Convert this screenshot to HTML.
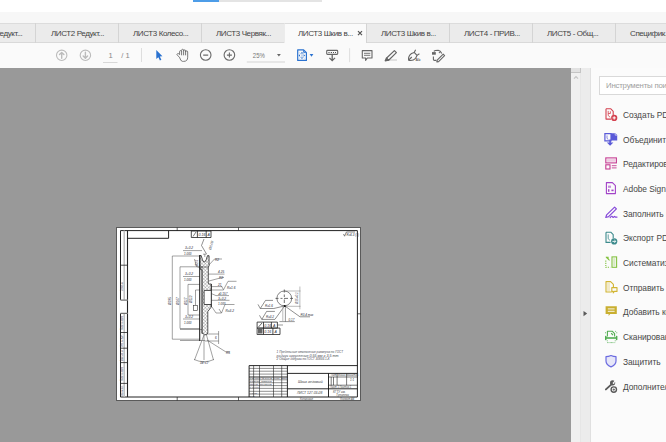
<!DOCTYPE html>
<html><head><meta charset="utf-8">
<style>
*{margin:0;padding:0;box-sizing:border-box}
html,body{width:666px;height:442px;overflow:hidden;background:#fff;font-family:"Liberation Sans",sans-serif}
.abs{position:absolute}
#topbar{left:0;top:0;width:666px;height:12px;background:#fff}
#band{left:0;top:12px;width:666px;height:11px;background:#f7f7f7}
#prog1{left:193px;top:0;width:26px;height:2px;background:#4d9de8}
#prog2{left:219px;top:0;width:103px;height:2px;background:#e4e4e4}
#tabs{left:0;top:23px;width:666px;height:20px;background:#ebebeb;border-top:1px solid #dcdcdc;border-bottom:1px solid #d9d9d9}
.tab{position:absolute;top:23px;height:20px;border-right:1px solid #d4d4d4;font-size:8px;letter-spacing:-0.4px;color:#444;line-height:22px;white-space:nowrap;overflow:hidden}
.tab span{position:absolute;top:0}
#toolbar{left:0;top:43px;width:666px;height:25px;background:#fafafa}
#doc{left:0;top:68px;width:571px;height:374px;background:#999}
#sb{left:571px;top:68px;width:10px;height:374px;background:#f0f0f0;border-right:1px solid #e6e6e6}
#sbtop{left:571px;top:68px;width:10px;height:5px;background:#e2e2e2;border-right:1px solid #c4c4c4;border-bottom:1px solid #c4c4c4}
#strip{left:581px;top:68px;width:10px;height:374px;background:#ececec;border-right:1px solid #e0e0e0}
#panel{left:591px;top:68px;width:75px;height:374px;background:#fbfbfb}
#search{left:599px;top:76px;width:80px;height:19px;background:#fff;border:1px solid #d9d9d9;font-size:7.8px;letter-spacing:-0.2px;color:#a0a0a0;line-height:17px;padding-left:6px;white-space:nowrap;overflow:hidden}
.item{position:absolute;left:623px;font-size:8.4px;letter-spacing:-0.05px;color:#474747;white-space:nowrap}
.ico{position:absolute;left:604px}
#page{left:116px;top:227px;width:245px;height:174px;background:#fff;border:1px solid #3a3a3a}
</style></head><body>
<div class="abs" id="topbar"></div>
<div class="abs" id="band"></div>
<div class="abs" id="prog1"></div>
<div class="abs" id="prog2"></div>
<div class="abs" id="tabs"></div>
<div class="tab" style="left:0;width:36px"><span style="left:-5px">Редукт...</span></div>
<div class="tab" style="left:36px;width:83px"><span style="left:15px">ЛИСТ2 Редукт...</span></div>
<div class="tab" style="left:119px;width:83px"><span style="left:14px">ЛИСТ3 Колесо...</span></div>
<div class="tab" style="left:202px;width:83px"><span style="left:14px">ЛИСТ3 Червяк...</span></div>
<div class="tab" style="left:284px;width:83px;background:#fafafa;height:21px;line-height:21px;border-top:1px solid #dcdcdc;border-left:1px solid #ececec"><span style="left:13px;top:-0.6px">ЛИСТ3 Шкив в...</span><svg style="position:absolute;left:71px;top:6px" width="8" height="8"><path d="M2,1.1L6,5.1M6,1.1L2,5.1" stroke="#555" stroke-width="1.2"/></svg></div>
<div class="tab" style="left:367px;width:83px"><span style="left:14px">ЛИСТ3 Шкив в...</span></div>
<div class="tab" style="left:450px;width:83px"><span style="left:14px">ЛИСТ4 - ПРИВ...</span></div>
<div class="tab" style="left:533px;width:83px"><span style="left:14px">ЛИСТ5 - Общ...</span></div>
<div class="tab" style="left:616px;width:60px"><span style="left:14px">Специфик...</span></div>
<div class="abs" id="toolbar"></div>
<svg class="abs" style="left:0;top:0" width="666" height="68" viewBox="0 0 666 68">
<g fill="none" stroke="#bcbcbc" stroke-width="1.1">
<circle cx="61.7" cy="55.3" r="5.2"/>
<circle cx="85.4" cy="55.3" r="5.2"/>
</g>
<g fill="none" stroke="#bcbcbc" stroke-width="1.4" stroke-linecap="round" stroke-linejoin="round">
<path d="M61.7,58.3V52.6M59.5,54.6L61.7,52.4L63.9,54.6"/>
<path d="M85.4,52.3V58M83.2,56L85.4,58.2L87.6,56"/>
</g>
<text x="108.6" y="58" font-size="7.6" fill="#888" font-family="Liberation Sans">1</text>
<line x1="103" y1="62.5" x2="117.5" y2="62.5" stroke="#d8d8d8" stroke-width="1"/>
<text x="121.2" y="58" font-size="7.6" fill="#888" font-family="Liberation Sans">/ 1</text>
<line x1="141.5" y1="48" x2="141.5" y2="62" stroke="#dedede" stroke-width="1"/>
<path d="M156.3,50L162.4,56.3L159.8,56.5L161.4,59.8L159.9,60.5L158.4,57.2L156.3,59Z" fill="#2a72d0"/>
<g fill="#fafafa" stroke="#6a6a6a" stroke-width="0.9" stroke-linejoin="round">
<path d="M179.5,57.2L177.3,55.2Q176.4,54.2 177.6,53.6Q178.6,53.3 179.6,54.6V51.7Q179.6,50.6 180.6,50.6Q181.6,50.6 181.6,51.7V50.4Q181.6,49.3 182.6,49.3Q183.6,49.3 183.6,50.4V50.9Q183.6,49.9 184.6,49.9Q185.6,49.9 185.6,50.9V51.9Q185.6,50.9 186.6,50.9Q187.7,50.9 187.7,51.9V57.2Q187.7,61.4 183.6,61.4H182.6Q180.6,61.4 179.5,57.2Z"/>
<path d="M181.6,51.7V55.3M183.6,50.4V55.3M185.6,50.9V55.3"/>
</g>
<g fill="none" stroke="#6a6a6a" stroke-width="1.1">
<circle cx="205.7" cy="55" r="5.3"/>
<circle cx="229.4" cy="55" r="5.3"/>
<path d="M203.2,55.1H208.2M226.9,55.1H231.9M229.4,52.6V57.6"/>
</g>
<text x="252.8" y="57.8" font-size="7.6" textLength="12" lengthAdjust="spacingAndGlyphs" fill="#777" font-family="Liberation Sans">25%</text>
<path d="M277,54L280.8,54L278.9,56.6Z" fill="#666"/>
<line x1="246.8" y1="62" x2="285" y2="62" stroke="#d4d4d4" stroke-width="1"/>
<g fill="none" stroke="#2a72d0" stroke-width="1.2" stroke-linejoin="round">
<path d="M297.7,49.8H303.6L306.4,52.6V60.4H297.7Z"/>
<path d="M303.6,50.2V52.4H305.8" stroke-width="0.9"/>
</g>
<g fill="#2a72d0">
<path d="M300.6,53.4L302,51.8L303.2,53.4Z"/>
<path d="M300.6,57.4L302,59L303.2,57.4Z"/>
<path d="M300,54.3L298.6,55.5L300,56.7Z"/>
<path d="M303.6,54.3L305.2,55.5L303.6,56.7Z"/>
</g>
<path d="M299.5,52.5L304.5,58.5M304.5,52.5L299.5,58.5" stroke="#2a72d0" stroke-width="0.5" opacity="0.6"/>
<path d="M309.6,54.1L313.4,54.1L311.5,56.8Z" fill="#2a72d0"/>
<g fill="none" stroke="#666" stroke-width="1.1">
<rect x="326.7" y="50.4" width="11" height="4" rx="0.8"/>
<path d="M332.2,55V60.5M329.4,57.9L332.2,60.6L335,57.9" stroke-width="1.3"/>
</g>
<g fill="#555"><rect x="328" y="52" width="2.4" height="1" fill="#999"/><rect x="331" y="52" width="1" height="1"/><rect x="333" y="52" width="1" height="1"/><rect x="335" y="52" width="1" height="1"/></g>
<line x1="349.6" y1="48.2" x2="349.6" y2="62.2" stroke="#dedede" stroke-width="1"/>
<g fill="none" stroke="#666" stroke-width="1.1" stroke-linejoin="round">
<path d="M362.3,50.6H372V58H367.3L365.6,60.3V58H362.3Z"/>
<path d="M364,53.3H370.3M364,55.3H370.3" stroke-width="0.9"/>
</g>
<line x1="386.5" y1="60" x2="397" y2="60" stroke="#cfcfcf" stroke-width="1.2"/>
<g fill="#fafafa" stroke="#666" stroke-width="1.2" stroke-linejoin="round">
<path d="M394.4,50.6L396.4,52.6L388.6,60.2L386.4,58.2Z"/>
<path d="M386.4,58.2L385.2,60.8L388.6,60.2Z" fill="#666"/>
</g>
<g fill="none" stroke="#666" stroke-width="1.1" stroke-linejoin="round">
<path d="M408.6,60.2Q408,56 411.5,53.5L414.2,52.4L417,55.4L415.6,58.3Q412.6,61.4 408.6,60.2Z"/>
<path d="M408.8,60L411.8,57M414.2,52.4L415.6,49.8M417,55.4L419.4,53.8"/>
</g>
<text x="415.6" y="60.6" font-size="3.6" fill="#666" font-family="Liberation Sans" font-weight="bold">Ab</text>
<g fill="none" stroke="#666" stroke-width="1.1" stroke-linejoin="round">
<path d="M433.4,56.4V59.6Q433.4,60.4 434.4,60.4H436.4"/>
<path d="M433.8,51.4Q434.6,50.2 438.2,50.2Q440.4,50.6 441.8,53.4"/>
<path d="M443.2,54.2L444.6,55.6L438.6,61.6L436.8,62L437.2,60.2Z"/>
</g>
<rect x="432" y="52.1" width="3.8" height="2.6" fill="#666"/>
<circle cx="439.4" cy="52.6" r="0.7" fill="#666"/>
</svg>
<div class="abs" id="doc"></div>
<div class="abs" id="sb"></div>
<div class="abs" id="sbtop"></div>
<div class="abs" id="strip"></div>
<svg class="abs" style="left:571px;top:72px" width="10" height="10"><path d="M3,6.6L5,4.6L7,6.6" fill="none" stroke="#c4c4c4" stroke-width="1.3"/></svg>
<svg class="abs" style="left:581px;top:308px" width="10" height="10"><path d="M2.5,3L6.2,5.6L2.5,8.3Z" fill="#5a5a5a"/></svg>
<div class="abs" id="panel"></div>
<div class="abs" id="search">Инструменты поиска</div>
<svg class="abs" style="left:0;top:0" width="666" height="442" viewBox="0 0 666 442">
<defs>
<pattern id="hatch" patternUnits="userSpaceOnUse" width="2.6" height="2.6" patternTransform="rotate(45)">
<rect width="2.6" height="2.6" fill="#fff"/><line x1="0" y1="0" x2="0" y2="2.6" stroke="#444" stroke-width="0.6"/>
</pattern>
<pattern id="xhatch" patternUnits="userSpaceOnUse" width="2.4" height="2.4" patternTransform="rotate(45)">
<rect width="2.4" height="2.4" fill="#fff"/><path d="M0,0V2.4M0,0H2.4" stroke="#555" stroke-width="0.5"/>
</pattern>
</defs>
<rect x="116.5" y="227.5" width="244" height="173" fill="#fff" stroke="#5a5a5a" stroke-width="1"/>
<g fill="none" stroke="#222">
<!-- frame -->
<path d="M120.5,230.6H357.4V397H120.5Z" stroke-width="1"/>
<path d="M127.5,230.6V397" stroke-width="1.1"/>
<path d="M124.2,230.6V300M124.2,313.3V397" stroke="#bbb" stroke-width="1.4"/>
<path d="M120.5,300.1H127.5M120.5,313.3H127.5M120.5,300V313.3" stroke="#fff" stroke-width="1.2"/>
<path d="M120.5,265.2H127.5M120.5,300.1H127.5M120.5,313.3H127.5M120.5,332.5H127.5M120.5,348.2H127.5M120.5,362.6H127.5M120.5,383.4H127.5" stroke-width="0.8"/>
<path d="M127.5,238.3H168.6V230.6" stroke-width="1"/>
<path d="M177.2,227.5V231M177.2,397V400.5M238.5,227.5V231M238.5,397V400.5M357.4,313.8H360.5" stroke-width="0.7"/>
<!-- tolerance frame top -->
<path d="M191.3,231H211V237.5H191.3ZM197.4,231V237.5M206.2,231V237.5" stroke-width="0.8"/>
<path d="M193,236.5L196,232" stroke-width="0.6"/>
<path d="M204,239L201.5,245.5L206.5,254" stroke-width="0.5"/>
</g>
<g fill="#2e2e3a" font-family="Liberation Sans" font-style="italic">
<text x="198.5" y="235.8" font-size="3.6">0.16</text>
<text x="207.4" y="235.8" font-size="3.6">A</text>
<text x="0" y="0" font-size="3.4" transform="translate(211,250) rotate(-75)">Ø0.08</text>
<text font-size="2.6" fill="#3a3a4a" transform="translate(123.4,291) rotate(-90)" textLength="9" lengthAdjust="spacingAndGlyphs">Справ. №</text>
<text font-size="2.6" fill="#3a3a4a" transform="translate(123.4,330) rotate(-90)" textLength="14" lengthAdjust="spacingAndGlyphs">Подп. и дата</text>
<text font-size="2.6" fill="#3a3a4a" transform="translate(123.4,346.5) rotate(-90)" textLength="12" lengthAdjust="spacingAndGlyphs">Инв. № дубл.</text>
<text font-size="2.6" fill="#3a3a4a" transform="translate(123.4,361) rotate(-90)" textLength="11" lengthAdjust="spacingAndGlyphs">Взам. инв. №</text>
<text font-size="2.6" fill="#3a3a4a" transform="translate(123.4,381) rotate(-90)" textLength="14" lengthAdjust="spacingAndGlyphs">Подп. и дата</text>
<text font-size="2.6" fill="#3a3a4a" transform="translate(123.4,395.5) rotate(-90)" textLength="10" lengthAdjust="spacingAndGlyphs">Инв. № подл.</text>
</g>
<!-- dimension lines left -->
<g fill="none" stroke="#444" stroke-width="0.5">
<path d="M172.3,256V339.2M172.3,256H200M172.3,339.2H200"/>
<path d="M180,266.8V328.5M180,266.8H200M180,328.5H200"/>
<path d="M188,284.4V315M188,284.4H200M188,315H200"/>
<path d="M195.5,290V305.4M195.5,290H200"/>
<path d="M183,250.6H202M183,276.5H200M183,319H200"/>
<path d="M194.5,259L196.5,266.5L199.5,267.5"/>
<path d="M180,329.5H205M180,340.5H205M218.6,331V344M205,334H218.6M205,341H218.6"/>
<path d="M207,340L226,352L230,352"/>
<!-- right leaders -->
<path d="M208,266L214.5,259H222M208,274.1H224.5M209,281L222,277.5H224M211,286.6H222"/>
<path d="M211.5,290H223.5M221.5,286L223.5,289.8L228,281.3H236.5"/>
<path d="M207.5,290.7Q212,294.5 216,295.6H229"/>
<path d="M207,300.3H229.5"/>
<path d="M212,307L216,313H221.5M219,309L221.5,313L225,304.5H234.5"/>
<path d="M204,335L194.5,360M206.5,335L213.5,360M194,359.5Q204,364 214,359.5M204,335V360" />
</g>
<g fill="#2e2e3a" font-family="Liberation Sans" font-style="italic" font-size="3.2">
<text x="185" y="249">3+0.2</text>
<text x="184" y="254.5" font-size="3">1.000</text>
<text x="185" y="275">3+0.2</text>
<text x="184" y="280.5" font-size="3">1.000</text>
<text x="185" y="318">3+0.2</text>
<text x="184" y="323.5" font-size="3">1.000</text>
<text x="215" y="261">R2</text>
<text transform="translate(198.2,266) rotate(-90)" font-size="2.8">Ø2.5</text>
<text x="218" y="273">4.25</text>
<text x="219" y="279">R2</text>
<text x="218" y="285.5">21</text>
<text x="227" y="289">Ra1.6</text>
<text x="217.5" y="294.5">⌀0.157</text>
<text x="218" y="299.6">3+0.2</text>
<text x="218" y="305" font-size="3">1.000</text>
<text x="225.5" y="312">Ra3.2</text>
<text x="226" y="353.5">R5</text>
<text x="200" y="363.5" font-size="3">34°±1°</text>
<text x="215" y="338.5" font-size="3">6</text>
<text transform="translate(171,305) rotate(-90)">Ø195</text>
<text transform="translate(179,305) rotate(-90)">Ø167</text>
<text transform="translate(187,305) rotate(-90)">Ø117</text>
<text transform="translate(192,303) rotate(-90)">Ø112</text>
</g>
<rect x="193.5" y="305.4" width="4" height="5" fill="#fff" stroke="#333" stroke-width="0.6"/>
<!-- part section -->
<path d="M200,255.7H201.2L202.2,259.5Q203,262 204.3,262Q205.6,262 206.4,259.5L207.6,255.7H208.9V266L208.3,267V283Q208.3,284 209.3,284H211.3V307L207.8,311.5V333L206.5,334.7H204.5L202,333V270L200,269Z" fill="url(#xhatch)" stroke="#222" stroke-width="0.75"/>
<path d="M200,255.7H201.2L202.2,259.5Q203,262 204.3,262Q205.6,262 206.4,259.5L207.6,255.7H208.9V266L208.3,267H200Z" fill="url(#xhatch)" stroke="#333" stroke-width="0.6"/>
<path d="M203,254.2H206.5M204.8,254.2V257" stroke="#444" stroke-width="0.5" fill="none"/>
<rect x="204.1" y="290.4" width="7.2" height="14.1" fill="#fff"/><path d="M211.3,290.4H204.1V304.5H211.3M211.3,284V307" fill="none" stroke="#222" stroke-width="0.8"/>
<path d="M199.7,255V341" stroke="#222" stroke-width="1.1" fill="none"/>
<path d="M202,266V334" stroke="#333" stroke-width="0.6" fill="none"/>
<!-- circle detail -->
<g fill="none" stroke="#333" stroke-width="0.6">
<circle cx="284.3" cy="298.4" r="7.4"/>
<path d="M275.5,298.4H278.5M280.5,298.4H282.5M284,298.4H288M290,298.4H293M284.3,289.5V292.5M284.3,294.5V297M284.3,299.5V303" stroke-width="0.7"/>
<path d="M299.9,286.5V309.3M284.3,291H300.5M285,306.3H300.5" stroke="#666" stroke-width="0.45"/>
<path d="M258,304.4L260.3,308.5L265.5,300.4H273M260.3,308.5H273.8L284.7,305.9" stroke-width="0.55"/>
<path d="M259.5,315.3L261.8,319.4L266.6,311.4H274.9M261.8,319.4H274.9L284.7,305.9" stroke-width="0.55"/>
<path d="M284.7,305.9L300,316.8H310" stroke-width="0.55"/>
<path d="M285.4,306V321.6M279.4,321.6H294.8M277.4,325H283" stroke-width="0.5"/>
<path d="M282.8,307V321" stroke="#aaa" stroke-width="0.8"/>
</g>
<circle cx="284.7" cy="305.9" r="1" fill="#111"/>
<g fill="#2e2e3a" font-family="Liberation Sans" font-style="italic" font-size="3">
<text x="265" y="306.5">Ra1.6</text>
<text x="266" y="318">Ra3.2</text>
<text x="300.5" y="316">R0.4 max</text>
<text x="288.5" y="320.5">0.17</text>
<text transform="translate(297.5,304) rotate(-90)">Ø15+0.1</text>
</g>
<g fill="none" stroke="#222" stroke-width="0.8">
<path d="M257.1,322.1H277.4V328.1H257.1ZM263.5,322.1V334.5M271.4,322.1V328.1"/>
<path d="M257.1,328.1H280V334.5H257.1ZM272.9,328.1V334.5"/>
</g>
<rect x="258" y="329" width="4.5" height="4.5" fill="#666"/>
<path d="M258.5,327L262,323" stroke="#222" stroke-width="0.7"/>
<g fill="#2e2e3a" font-family="Liberation Sans" font-style="italic" font-size="3.6">
<text x="264.3" y="327">0.16</text><text x="273" y="327">A</text>
<text x="264.3" y="333.4">0.16</text><text x="274.5" y="333.4">A</text>
</g>
<!-- notes -->
<g fill="#4a4a55" font-family="Liberation Sans" font-style="italic" font-size="3.2">
<text x="276.6" y="353" textLength="66.5" lengthAdjust="spacingAndGlyphs">1 Предельные отклонения размеров по ГОСТ</text>
<text x="276.6" y="356.5" textLength="62" lengthAdjust="spacingAndGlyphs">радиус скругления 0.55 мм в 3.5 mm</text>
<text x="276.6" y="360" textLength="53" lengthAdjust="spacingAndGlyphs">2 Общие допуски по ГОСТ 30893.1-К</text>
</g>
<path d="M343.5,234L344.6,236.2L346.4,232H355" fill="none" stroke="#333" stroke-width="0.6"/>
<text x="346.5" y="236" font-size="3" fill="#2e2e3a" font-family="Liberation Sans" font-style="italic">Ra6.3 (√)</text>
<!-- title block -->
<g fill="none" stroke="#111" stroke-width="0.9">
<path d="M249.1,397V365.6H357.4M287.4,365.6V397M287.4,373.4H357.4M287.4,388.8H357.4M328.5,373.4V397M249.1,377H287.4"/>
</g>
<g fill="none" stroke="#222" stroke-width="0.6">
<path d="M253.6,365.6V397M259.5,365.6V397M273.5,365.6V397M281.7,365.6V397"/>
<path d="M249.1,368.4H287.4M249.1,371.2H287.4M249.1,374.1H287.4M249.1,379.8H287.4M249.1,382.7H287.4M249.1,385.6H287.4M249.1,388.4H287.4M249.1,391.3H287.4M249.1,394.1H287.4" stroke-width="0.5"/>
<path d="M328.5,377H357.4M328.5,385.2H357.4M331.2,377V385.2M337.1,373.4V385.2M346.6,373.4V385.2M333.5,377V385.2"/>
</g>
<g fill="#2e2e3a" font-family="Liberation Sans" font-size="2.2">
<text x="249.6" y="379.3" textLength="37" lengthAdjust="spacingAndGlyphs">Изм Лист  № докум.  Подп. Дата</text>
<text x="249.6" y="382.2" textLength="22" lengthAdjust="spacingAndGlyphs">Разраб.  Иванов</text>
<text x="249.6" y="385.1" textLength="22" lengthAdjust="spacingAndGlyphs">Пров.   Петров</text>
<text x="249.6" y="388" textLength="10">Т.контр.</text>
<text x="249.6" y="393.7" textLength="8">Н.контр.</text>
<text x="249.6" y="396.6" textLength="6">Утв.</text>
</g>
<g fill="#444" font-family="Liberation Sans" font-style="italic">
<text x="298" y="383" font-size="3.6">Шкив ведомый</text>
<text x="297" y="393.5" font-size="3.4">ЛИСТ 127.03-08</text>
<text x="333" y="393" font-size="3">КГТУ им.</text>
<text x="336" y="396" font-size="3">Туполева</text>
<text x="331" y="376" font-size="2.6">Лит.   Масса  Масштаб</text>
<text x="350" y="381" font-size="3">1:1</text>
<text x="330" y="387.8" font-size="2.6">Лист 1  Листов 1</text>
<text x="300" y="400" font-size="2.6">Копировал</text>
<text x="340" y="400" font-size="2.6">Формат A4</text>

</g>
</svg>

<div class="item" style="top:109.8px">Создать PDF</div>
<div class="item" style="top:134.5px">Объединить файлы</div>
<div class="item" style="top:159.2px">Редактировать PDF</div>
<div class="item" style="top:183.9px">Adobe Sign</div>
<div class="item" style="top:208.6px">Заполнить и подписать</div>
<div class="item" style="top:233.3px">Экспорт PDF</div>
<div class="item" style="top:258.0px">Систематизировать страницы</div>
<div class="item" style="top:282.7px">Отправить и отслеживать</div>
<div class="item" style="top:307.4px">Добавить комментарий</div>
<div class="item" style="top:332.1px">Сканирование и оптимизация</div>
<div class="item" style="top:356.8px">Защитить</div>
<div class="item" style="top:381.5px">Дополнительные инструменты</div>
<svg class="abs" style="left:0;top:0" width="666" height="442" viewBox="0 0 666 442">
<g transform="translate(605,107.9)"><g stroke="#d4414f" fill="none" stroke-width="1.1" stroke-linejoin="round"><path d="M1,0.8H5.6L8.2,3.4V7.2M1,0.8V11.2H6.2"/><path d="M3.2,3V7.6L5.2,9.4M3.2,5.6H5.4V3.4" stroke-width="0.8"/></g><circle cx="9.2" cy="10" r="3.1" fill="#d4414f"/><path d="M7.6,10H10.8M9.2,8.4V11.6" stroke="#fff" stroke-width="1"/></g>
<g transform="translate(605,132.6)"><path d="M-0.1,1.1H6V8.3H-0.1Z" fill="none" stroke="#5a5ad8" stroke-width="1.2"/><path d="M2,2.8V5.8L3.4,7" stroke="#5a5ad8" stroke-width="0.7" fill="none"/><path d="M6,0.6H10.4L12.2,2.4V8H6Z" fill="#5a5ad8"/><path d="M10.2,0.8V2.6H12" stroke="#fbfbfb" stroke-width="0.6" fill="none"/><path d="M5.1,7V10.5" stroke="#5a5ad8" stroke-width="1.6"/><path d="M1.8,9.8H8.4L5.1,13.1Z" fill="#5a5ad8"/></g>
<g transform="translate(605,157.3)"><g stroke="#c53c92" fill="none" stroke-width="1.1"><rect x="0.8" y="0.6" width="10.6" height="5"/><rect x="0.8" y="7.5" width="4.2" height="4.2"/></g><path d="M6.8,8.4H11.6M6.8,10.6H11.6" stroke="#c53c92" stroke-width="0.9"/><rect x="1.8" y="1.8" width="8.6" height="2.6" fill="#c53c92" opacity="0.25"/></g>
<g transform="translate(605,182.0)"><g stroke="#a243c8" fill="none" stroke-width="1.1" stroke-linejoin="round"><path d="M1.4,0.6H7.4L10.4,3.6V11.6H1.4Z"/></g><g fill="#a243c8"><rect x="3" y="3.6" width="3" height="2.2" opacity="0.6"/><rect x="3" y="7.2" width="1.4" height="2.6"/><rect x="6.4" y="7.6" width="2.2" height="1.6"/></g></g>
<g transform="translate(605,206.7)"><g stroke="#8549d9" fill="none" stroke-width="1.2" stroke-linejoin="round" stroke-linecap="round"><path d="M9.6,0.4L11.4,2.2L3.6,10L0.8,10.8L1.6,8.2Z"/><path d="M5.2,10.8Q7,8.6 7.4,10.2Q8.2,11.4 9,10Q9.8,9.4 10.2,10.4L12,10.4"/></g></g>
<g transform="translate(605,231.4)"><g stroke="#3d8b8d" fill="none" stroke-width="1.1" stroke-linejoin="round"><path d="M1,0.8H5.8L8.2,3.2V6.8M1,0.8V11H5.6"/><path d="M3.2,3V7.4L5,9" stroke-width="0.8"/></g><circle cx="9.2" cy="10" r="3.1" fill="#3d8b8d"/><path d="M7.4,10H10.6M9.4,8.6L10.8,10L9.4,11.4" stroke="#fff" stroke-width="0.9" fill="none"/></g>
<g transform="translate(605,256.1)"><g stroke="#84c241" fill="none" stroke-width="1.1"><rect x="7" y="0.8" width="4.6" height="10.4"/><path d="M0.8,4.4V11.2H5.2" stroke-dasharray="1.2,1"/></g><path d="M0.6,0.6L3.6,0.6L3.6,3.6Z" fill="#84c241"/><path d="M1,1L4.6,4.2" stroke="#84c241" stroke-width="1.1"/><rect x="8.2" y="2" width="2.2" height="8" fill="#84c241" opacity="0.3"/></g>
<g transform="translate(605,280.8)"><g stroke="#d2b533" fill="none" stroke-width="1.1" stroke-linejoin="round"><path d="M6.8,11.2H1V0.8H5.6L8.4,3.6V6.2"/><path d="M6.8,6.8H12V10.6H9.4L8.2,12V10.6H6.8Z"/></g><rect x="2" y="2" width="3" height="8.4" fill="#d2b533" opacity="0.25"/></g>
<g transform="translate(605,305.5)"><path d="M0.6,0.8H11.8V8.6H5.2L3.6,10.6V8.6H0.6Z" fill="#c9af30"/><path d="M2.8,3.4H9.6M2.8,5.8H9.6" stroke="#fff" stroke-width="0.9"/></g>
<g transform="translate(605,330.2)"><path d="M2.4,6.2V1H7.2L9.6,3.4V6.2" fill="none" stroke="#52ad52" stroke-width="1.1" stroke-linejoin="round"/><path d="M6.2,3L8,5" stroke="#52ad52" stroke-width="1.2"/><rect x="0.6" y="7" width="11.2" height="1.6" fill="#52ad52"/><rect x="0" y="5.6" width="1.5" height="4.4" rx="0.6" fill="#52ad52"/><rect x="10.9" y="5.6" width="1.5" height="4.4" rx="0.6" fill="#52ad52"/><path d="M2.2,12.4H10.2" stroke="#52ad52" stroke-width="0.8" stroke-dasharray="0.8,0.5"/><g fill="#52ad52"><circle cx="0.5" cy="2.6" r="0.55"/><circle cx="10.6" cy="1" r="0.5"/><circle cx="11.8" cy="2.6" r="0.55"/><circle cx="2.2" cy="10.6" r="0.5"/><circle cx="10.2" cy="10.6" r="0.5"/></g></g>
<g transform="translate(605,354.9)"><path d="M6,0.6Q8.6,1.8 11,1.8V6.2Q11,10 6,12Q1,10 1,6.2V1.8Q3.4,1.8 6,0.6Z" fill="#e6e6f8" stroke="#6b6be0" stroke-width="1.2" stroke-linejoin="round"/><path d="M6,1.6V11" stroke="#fff" stroke-width="0.1"/></g>
<g transform="translate(605,379.6)"><path d="M0.9,9.8L6.2,5" stroke="#5a5a5a" stroke-width="1.9" stroke-linecap="round"/><circle cx="7.6" cy="3.2" r="2.6" fill="#5a5a5a"/><path d="M8.6,1.6L10.6,0.8L9.6,3.4Z" fill="#f9f9f9"/><circle cx="8.6" cy="3.4" r="0.9" fill="#f9f9f9"/><circle cx="8.8" cy="10" r="2.7" fill="#f9f9f9" stroke="#5a5a5a" stroke-width="1.4"/><path d="M7.6,10H10M8.8,8.8V11.2" stroke="#5a5a5a" stroke-width="0.8"/></g>
</svg>

</body></html>
